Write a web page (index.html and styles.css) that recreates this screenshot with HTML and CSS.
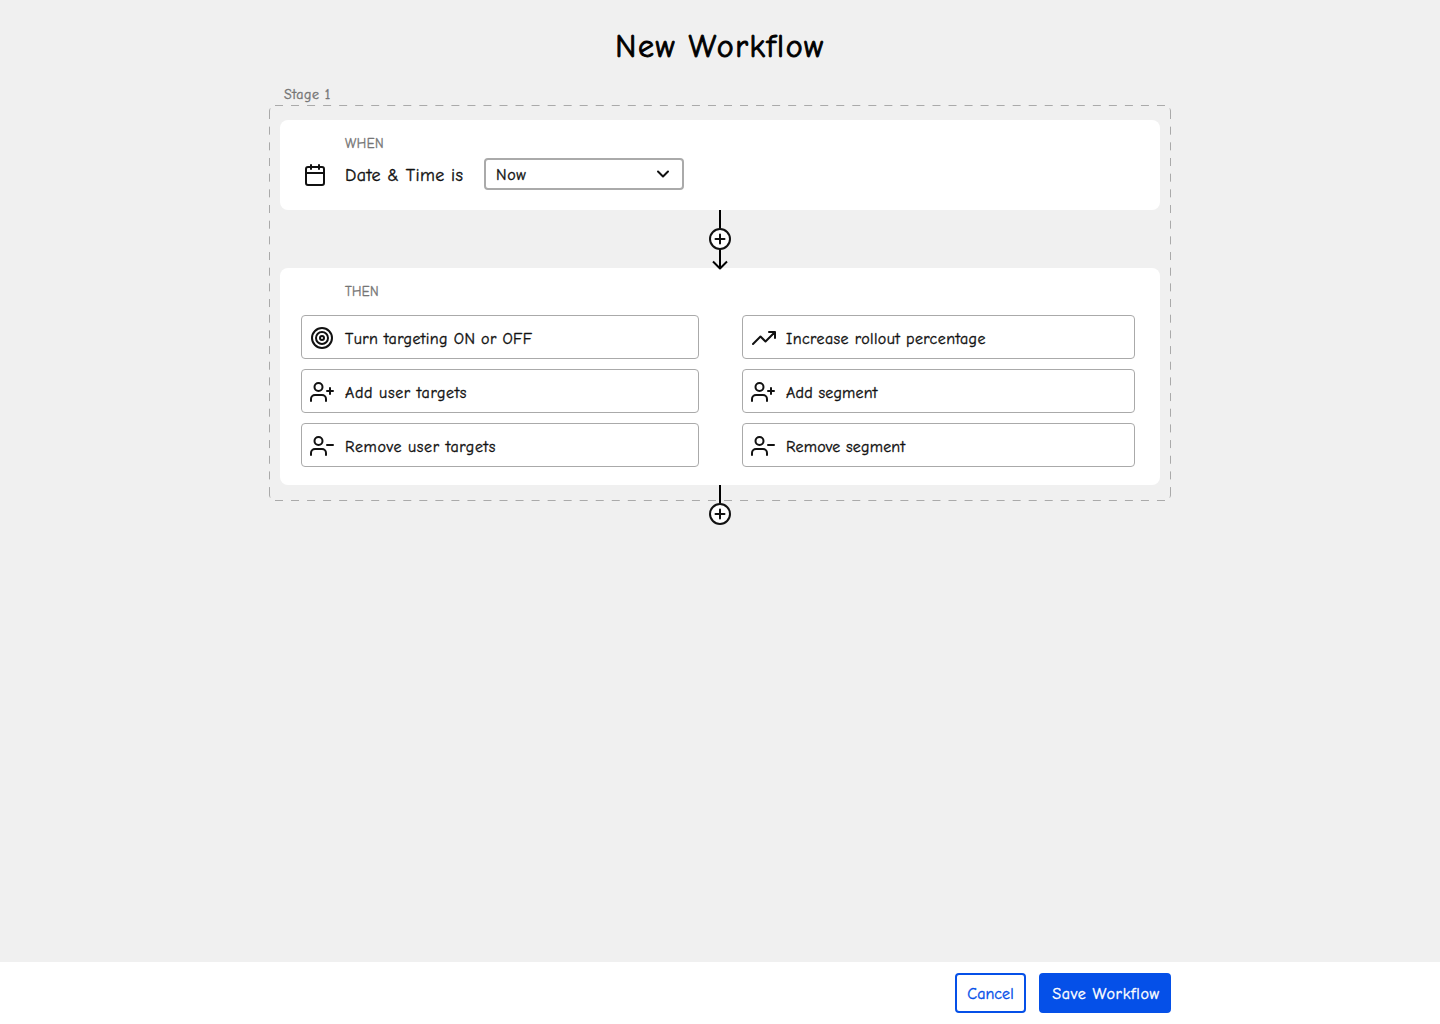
FILE: index.html
```html
<!DOCTYPE html>
<html lang="en">
<head>
<meta charset="utf-8">
<title>New Workflow</title>
<link rel="stylesheet" href="styles.css">
</head>
<body>
<svg class="sprite" aria-hidden="true">
  <symbol id="calendar" viewBox="0 0 24 24"><rect x="3" y="4" width="18" height="18" rx="2"/><path d="M16 2v4M8 2v4M3 10h18"/></symbol>
  <symbol id="chevron" viewBox="0 0 24 24"><path d="M6 9l6 6 6-6"/></symbol>
  <symbol id="target" viewBox="0 0 24 24"><circle cx="12" cy="12" r="10"/><circle cx="12" cy="12" r="6"/><circle cx="12" cy="12" r="2"/></symbol>
  <symbol id="trend" viewBox="0 0 24 24"><path d="M23 6l-9.500 9.500-5-5L1 18M17 6h6v6"/></symbol>
  <symbol id="user-plus" viewBox="0 0 24 24"><path d="M16 21v-2a4 4 0 0 0-4-4H5a4 4 0 0 0-4 4v2M20 8v6M23 11h-6"/><circle cx="8.500" cy="7" r="4"/></symbol>
  <symbol id="user-minus" viewBox="0 0 24 24"><path d="M16 21v-2a4 4 0 0 0-4-4H5a4 4 0 0 0-4 4v2M23 11h-6"/><circle cx="8.500" cy="7" r="4"/></symbol>
</svg>
<main class="workspace">
  <h1 class="title"><span>New Workflow</span></h1>
  <section class="stage">
    <h2 class="stage-label"><span>Stage 1</span></h2>
    <svg class="outline" viewBox="0 0 902 396" aria-hidden="true">
      <path class="dash-x" d="M6 .5H896M6 395.500H896"/>
      <path class="dash-y" d="M.5 6V391M901.500 6V391"/>
      <path d="M.5 6Q.5 4.500 1.200 3.500M901.500 6Q901.500 4.500 900.800 3.500M.5 390Q.5 391.500 1.200 392.500M901.500 390Q901.500 391.500 900.800 392.500"/>
    </svg>
    <div class="card when">
      <h3 class="kicker"><span>WHEN</span></h3>
      <div class="condition">
        <svg class="icon"><use href="#calendar"/></svg>
        <span class="condition-name">Date &amp; Time is</span>
        <button class="select" type="button"><span>Now</span><svg class="chevron"><use href="#chevron"/></svg></button>
      </div>
    </div>
    <svg class="connector" viewBox="0 0 24 60"><path class="line" d="M12 0v19M12 39v18M5 51.500l7 7 7-7"/><circle cx="12" cy="29" r="10"/><path d="M12 24.500v9M7.500 29h9"/></svg>
    <div class="card then">
      <h3 class="kicker"><span>THEN</span></h3>
      <div class="actions">
        <button class="action"><svg class="icon"><use href="#target"/></svg><span>Turn targeting ON or OFF</span></button>
        <button class="action"><svg class="icon"><use href="#trend"/></svg><span>Increase rollout percentage</span></button>
        <button class="action user"><svg class="icon"><use href="#user-plus"/></svg><span>Add user targets</span></button>
        <button class="action segment"><svg class="icon"><use href="#user-plus"/></svg><span>Add segment</span></button>
        <button class="action user"><svg class="icon"><use href="#user-minus"/></svg><span>Remove user targets</span></button>
        <button class="action segment"><svg class="icon"><use href="#user-minus"/></svg><span>Remove segment</span></button>
      </div>
    </div>
    <svg class="connector tail" viewBox="0 0 24 42"><path class="line" d="M12 0v19"/><circle cx="12" cy="29" r="10"/><path d="M12 24.500v9M7.500 29h9"/></svg>
  </section>
</main>
<footer class="footer">
  <div class="footer-inner">
    <button class="button cancel"><span>Cancel</span></button>
    <button class="button save"><span>Save Workflow</span></button>
  </div>
</footer>
</body>
</html>
```
FILE: styles.css
```css
* { box-sizing: border-box; }
body {
  margin: 0;
  height: 1024px;
  display: flex;
  flex-direction: column;
  background: #f0f0f0;
  color: #111;
  font-family: "Comic Neue", Lato, sans-serif;
  font-size: 16px;
  font-feature-settings: "liga" 1;
  -webkit-text-stroke: .35px currentColor;
  overflow: hidden;
}
h1, h2, h3 { margin: 0; font-weight: 400; }
button { font: inherit; font-feature-settings: inherit; color: inherit; margin: 0; }
svg {
  fill: none;
  stroke: #111;
  stroke-width: 2;
  stroke-linecap: round;
  stroke-linejoin: round;
  flex: none;
}
span { white-space: nowrap; }
.sprite { position: absolute; width: 0; height: 0; }
.workspace { flex: 1; }
.title {
  height: 85px;
  padding-top: 27px;
  font-size: 32px;
  line-height: 40px;
  text-align: center;
  color: #000;
  letter-spacing: 1.600px;
  -webkit-text-stroke: .9px currentColor;
}
.stage {
  position: relative;
  width: 902px;
  margin: 0 auto;
  padding: 0 11px;
  display: flex;
  flex-direction: column;
}
.stage-label {
  height: 35px;
  padding-left: 4px;
  font-size: 14px;
  line-height: 19px;
  color: #757575;
  letter-spacing: .5px;
}
.outline {
  position: absolute;
  left: 0;
  top: 20px;
  width: 902px;
  height: 396px;
  stroke: #aaa;
  stroke-width: 1;
  stroke-linecap: butt;
}
.dash-x { stroke-dasharray: 8 8.036; }
.dash-y { stroke-dasharray: 8 7.670; }
.card { position: relative; background: #fff; border-radius: 8px; }
.when { height: 90px; padding: 14px 23px; }
.kicker { font-size: 13px; line-height: 20px; color: #757575; padding-left: 42px; letter-spacing: .5px; }
.condition { display: flex; align-items: center; height: 32px; margin-top: 4px; }
.icon { width: 24px; height: 24px; }
.when .icon { margin-top: 2px; }
.condition-name { width: 139px; margin-left: 18px; padding-top: 2px; font-size: 18px; letter-spacing: .4px; }
.select {
  width: 200px;
  height: 32px;
  padding: 0 9px 0 10px;
  display: flex;
  align-items: center;
  justify-content: space-between;
  background: #fff;
  border: 2px solid #aaa;
  border-radius: 4px;
  letter-spacing: .7px;
}
.select span { padding-top: 2px; }
.chevron { width: 20px; height: 20px; stroke-width: 2.400; }
.connector { position: relative; z-index: 1; width: 24px; height: 60px; margin: 0 auto -2px; }
.connector .line { stroke: #000; stroke-linecap: butt; }
.connector circle { fill: #fff; }
.then { height: 217px; padding: 14px 25px 18px 21px; }
.then .kicker { padding-left: 44px; letter-spacing: .3px; }
.actions {
  display: grid;
  grid-template-columns: 398px 393px;
  column-gap: 43px;
  row-gap: 10px;
  margin-top: 13px;
}
.action {
  height: 44px;
  padding: 2px 8px 0;
  display: flex;
  align-items: center;
  gap: 11px;
  background: #fff;
  border: 1px solid #aaa;
  border-radius: 4px;
  letter-spacing: .4px;
}
.action span { padding-top: 2px; }
.action:nth-child(2) .icon { margin-left: 1px; margin-right: -1px; }
.user { letter-spacing: .630px; }
.segment { letter-spacing: .2px; }
.tail { height: 42px; margin-bottom: 0; }
.footer { height: 62px; background: #fff; padding-top: 11px; }
.footer-inner { width: 902px; margin: 0 auto; display: flex; justify-content: flex-end; gap: 13px; }
.button { height: 40px; border: 2px solid #0550e8; border-radius: 4px; padding: 2px 0 0; }
.cancel { width: 71px; color: #0550e8; background: #fff; letter-spacing: .05px; }
.save { width: 132px; color: #fff; background: #0550e8; letter-spacing: .7px; padding-left: 2px; }
```
